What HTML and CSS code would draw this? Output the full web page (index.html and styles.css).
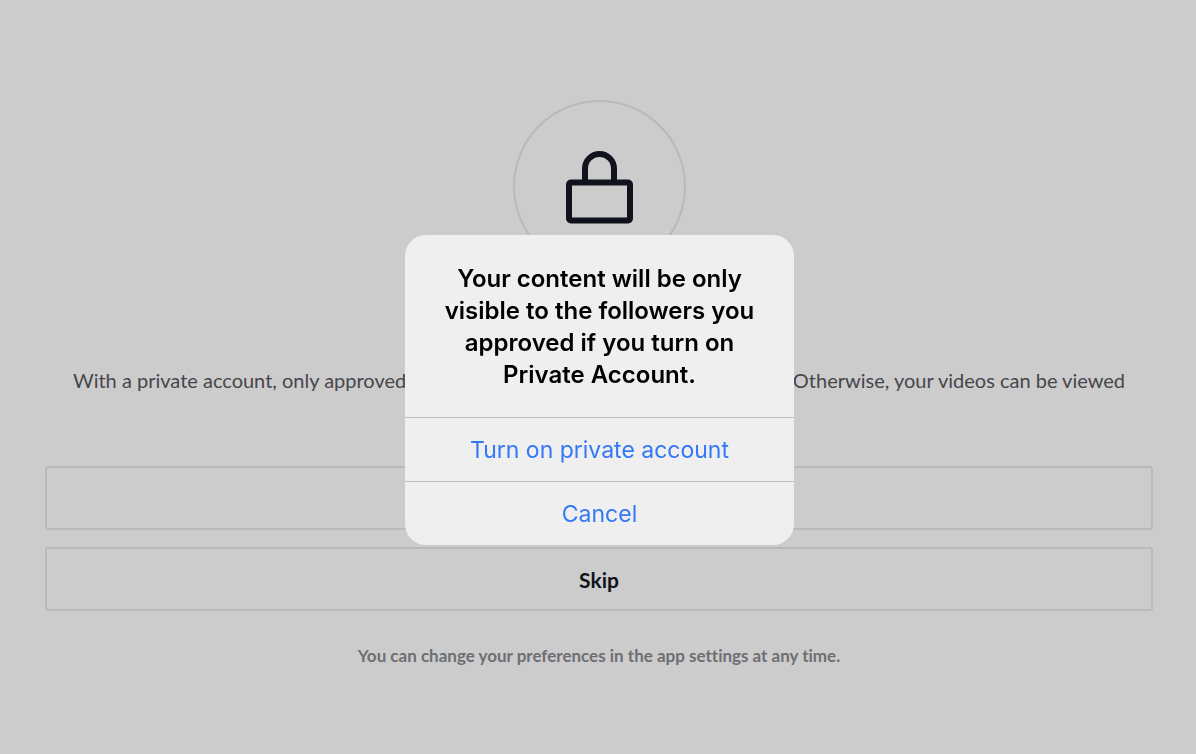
FILE: index.html
```html
<!DOCTYPE html>
<html lang="en">
<head>
<meta charset="UTF-8">
<meta name="viewport" content="width=device-width, initial-scale=1.0">
<title>Private Account</title>
<link rel="stylesheet" href="styles.css">
</head>
<body>

<main class="page">
  <div class="lock-circle">
    <svg class="lock-icon" viewBox="0 0 68 74" fill="none" stroke="#161823" stroke-width="6" aria-hidden="true">
      <path d="M20 31V18.500a14.500 14.500 0 0 1 29 0v12.500"/>
      <rect x="4" y="32.500" width="61" height="38" rx="2"/>
    </svg>
  </div>
  <p class="description">
    <span>With a private account, only approved</span>
    <span>Otherwise, your videos can be viewed</span>
  </p>
  <div class="actions">
    <button type="button" class="action" aria-label="Private account"></button>
    <button type="button" class="action">Skip</button>
  </div>
  <p class="note">You can change your preferences in the app settings at any time.</p>
</main>

<div class="overlay">
  <div class="alert" role="alertdialog" aria-modal="true" aria-labelledby="alertTitle">
    <h1 class="alert-title" id="alertTitle">Your content will be only visible to the followers you approved if you turn on Private Account.</h1>
    <button type="button" class="alert-button">Turn on private account</button>
    <button type="button" class="alert-button">Cancel</button>
  </div>
</div>

</body>
</html>
```
FILE: styles.css
```css
/* General styles */
* {
  box-sizing: border-box;
}

body {
  margin: 0;
  background-color: #fff;
  color: #161823;
  font-family: Lato, "Open Sans", sans-serif;
  font-variant-ligatures: none;
}

button {
  font-family: inherit;
  cursor: pointer;
}

/* Page behind the alert */
.page {
  display: flex;
  flex-direction: column;
  align-items: center;
  padding: 100px 43px 0 45px;
}

.lock-circle {
  display: flex;
  align-items: center;
  justify-content: center;
  width: 173px;
  height: 173px;
  border: 2px solid #e8e8e9;
  border-radius: 50%;
}

.lock-icon {
  width: 68px;
  height: 74px;
}

.description {
  display: flex;
  justify-content: space-between;
  align-self: stretch;
  margin: 93px 28px 0;
  color: #585860;
  font-size: 20px;
  line-height: 28px;
}

.actions {
  display: flex;
  flex-direction: column;
  align-self: stretch;
  gap: 17px;
  margin-top: 72px;
}

.action {
  height: 64px;
  padding: 0;
  border: 2px solid #e8e8e9;
  border-radius: 3px;
  background: none;
  color: #161823;
  font-size: 21px;
  font-weight: 700;
}

.note {
  margin: 33px 0 0;
  color: #8a8b91;
  font-size: 17px;
  font-weight: 700;
  line-height: 24px;
}

/* Alert */
.overlay {
  position: fixed;
  inset: 0;
  display: flex;
  align-items: center;
  justify-content: center;
  padding: 26px 0 0 3px;
  background-color: rgba(0, 0, 0, 0.2);
}

.alert {
  width: 389px;
  overflow: hidden;
  border-radius: 21px;
  background-color: #efefef;
  font-family: Inter, "Liberation Sans", sans-serif;
}

.alert-title {
  margin: 0;
  padding: 28px 36px 26px;
  color: #000;
  font-size: 24px;
  font-weight: 600;
  line-height: 32px;
  text-align: center;
}

.alert-button {
  display: block;
  width: 100%;
  height: 64px;
  padding: 0;
  border: 0;
  border-top: 1px solid #c0c0c1;
  background: none;
  color: #3478f6;
  font-size: 23px;
}
```
